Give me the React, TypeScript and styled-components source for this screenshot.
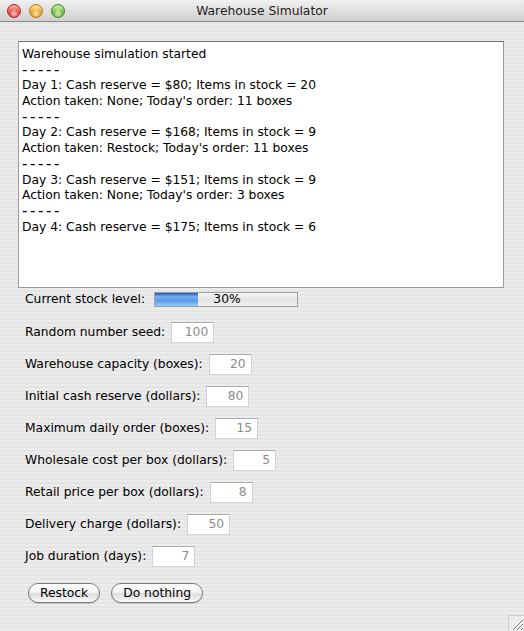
import React from "react";
import styled, { createGlobalStyle } from "styled-components";

const Global = createGlobalStyle`
  html, body { margin: 0; padding: 0; }
  body { font-family: "DejaVu Sans", "Liberation Sans", sans-serif; }
`;

const Window = styled.div`
  position: relative;
  width: 524px;
  height: 631px;
  display: flex;
  flex-direction: column;
  overflow: hidden;
  background: repeating-linear-gradient(
    to bottom,
    #ececec 0px,
    #ececec 2px,
    #e5e5e5 2px,
    #e5e5e5 4px
  );
`;

const TitleBar = styled.div`
  height: 21px;
  flex: 0 0 21px;
  border-bottom: 1px solid #8a8a8a;
  border-radius: 5px 5px 0 0;
  background: linear-gradient(to bottom, #f0f0f0 0%, #e0e0e0 50%, #cfcfcf 100%);
  display: flex;
  align-items: center;
  position: relative;
`;

const Lights = styled.div`
  display: flex;
  gap: 8px;
  padding-left: 7px;
`;

const Light = styled.span<{ $c: string; $d: string }>`
  width: 14px;
  height: 14px;
  border-radius: 50%;
  box-sizing: border-box;
  border: 1px solid ${(p) => p.$d};
  background: radial-gradient(circle at 50% 78%, #ffffffaa 0%, transparent 45%),
    radial-gradient(circle at 50% 30%, ${(p) => p.$c} 0%, ${(p) => p.$d} 100%);
  box-shadow: inset 0 2px 2px rgba(255, 255, 255, 0.5);
`;

const Title = styled.div`
  position: absolute;
  left: 0;
  right: 0;
  top: 0;
  bottom: 0;
  display: flex;
  align-items: center;
  justify-content: center;
  font-size: 12.3px;
  color: #222;
  pointer-events: none;
`;

const Content = styled.div`
  display: flex;
  flex-direction: column;
  padding: 19px 0 0 18px;
`;

const LogArea = styled.div`
  width: 486px;
  height: 247px;
  box-sizing: border-box;
  background: #fff;
  border: 1px solid #9a9a9a;
  border-top-color: #6e6e6e;
  padding: 5px 3px 0;
  font-size: 12.3px;
  line-height: 15.7px;
  color: #000;
`;

const Line = styled.div<{ $sep?: boolean }>`
  height: 15.7px;
  white-space: pre;
  letter-spacing: ${(p) => (p.$sep ? "2.6px" : "normal")};
  font-size: ${(p) => (p.$sep ? "15px" : "inherit")};
  line-height: 15.7px;
`;

const Form = styled.div`
  display: flex;
  flex-direction: column;
  padding: 0 0 0 7px;
`;

const Row = styled.div<{ $h?: number; $mb?: number }>`
  display: flex;
  align-items: center;
  height: ${(p) => p.$h ?? 32}px;
  margin-bottom: ${(p) => p.$mb ?? 0}px;
  font-size: 12.3px;
  color: #000;
`;

const Label = styled.span`
  margin-right: 6px;
`;

const Field = styled.div`
  width: 43px;
  height: 21px;
  box-sizing: border-box;
  background: #fff;
  border: 1px solid #d2d2d2;
  border-top-color: #ababab;
  color: #8a8a8a;
  font-size: 12.3px;
  display: flex;
  align-items: center;
  justify-content: flex-end;
  padding-right: 5px;
`;

const Progress = styled.div`
  position: relative;
  width: 144px;
  height: 15px;
  box-sizing: border-box;
  border: 1px solid #a0a0a0;
  background: linear-gradient(to bottom, #f6f6f6 0%, #e4e4e4 50%, #f0f0f0 100%);
  display: flex;
  align-items: center;
  justify-content: center;
  font-size: 12.3px;
  margin-left: 3px;
`;

const Fill = styled.div`
  position: absolute;
  left: 0;
  top: 0;
  bottom: 0;
  background: linear-gradient(
    to bottom,
    #1f56c0 0%,
    #7cb2f0 30%,
    #5a9ae6 55%,
    #93c9f8 100%
  );
`;

const ProgressText = styled.span`
  position: relative;
  margin-left: 2px;
`;

const ButtonRow = styled.div`
  display: flex;
  gap: 11px;
  padding: 11px 0 0 10px;
`;

const Button = styled.button`
  height: 20px;
  box-sizing: border-box;
  border: 1px solid #7a7a7a;
  border-radius: 10px;
  background: linear-gradient(to bottom, #ffffff 0%, #f3f3f3 45%, #dedede 55%, #f8f8f8 100%);
  font-family: "DejaVu Sans", "Liberation Sans", sans-serif;
  font-size: 12.3px;
  color: #000;
  padding: 0 11px;
  display: flex;
  align-items: center;
  box-shadow: 0 1px 1px rgba(0, 0, 0, 0.15);
`;

const Grip = styled.div`
  position: absolute;
  right: 0;
  bottom: 0;
  width: 16px;
  height: 16px;
  box-sizing: border-box;
  border-left: 1px solid #d0d0d0;
  border-top: 1px solid #d0d0d0;
  background: #ececec;
`;

const log = [
  "Warehouse simulation started",
  "-----",
  "Day 1: Cash reserve = $80; Items in stock = 20",
  "Action taken: None; Today's order: 11 boxes",
  "-----",
  "Day 2: Cash reserve = $168; Items in stock = 9",
  "Action taken: Restock; Today's order: 11 boxes",
  "-----",
  "Day 3: Cash reserve = $151; Items in stock = 9",
  "Action taken: None; Today's order: 3 boxes",
  "-----",
  "Day 4: Cash reserve = $175; Items in stock = 6",
];

const fields: [string, string][] = [
  ["Random number seed:", "100"],
  ["Warehouse capacity (boxes):", "20"],
  ["Initial cash reserve (dollars):", "80"],
  ["Maximum daily order (boxes):", "15"],
  ["Wholesale cost per box (dollars):", "5"],
  ["Retail price per box (dollars):", "8"],
  ["Delivery charge (dollars):", "50"],
  ["Job duration (days):", "7"],
];

export default function App() {
  const pct = 30;
  return (
    <>
      <Global />
      <Window>
        <TitleBar>
          <Lights>
            <Light $c="#ff8a80" $d="#b3201a" />
            <Light $c="#ffd86a" $d="#c77700" />
            <Light $c="#b6f07a" $d="#3c8e12" />
          </Lights>
          <Title>Warehouse Simulator</Title>
        </TitleBar>
        <Content>
          <LogArea>
            {log.map((l, i) => (
              <Line key={i} $sep={l === "-----"}>
                {l}
              </Line>
            ))}
          </LogArea>
          <Form>
            <Row $h={22} $mb={6}>
              <Label>Current stock level:</Label>
              <Progress>
                <Fill style={{ width: `${pct}%` }} />
                <ProgressText>{pct}%</ProgressText>
              </Progress>
            </Row>
            {fields.map(([l, v]) => (
              <Row key={l}>
                <Label>{l}</Label>
                <Field>{v}</Field>
              </Row>
            ))}
          </Form>
          <ButtonRow>
            <Button>Restock</Button>
            <Button>Do nothing</Button>
          </ButtonRow>
        </Content>
        <Grip>
          <svg width="15" height="15" viewBox="0 0 15 15">
            <path d="M14 4 L4 14 M14 8 L8 14 M14 12 L12 14" stroke="#777" strokeWidth="1" />
            <path d="M14 5 L5 14 M14 9 L9 14" stroke="#fff" strokeWidth="1" />
          </svg>
        </Grip>
      </Window>
    </>
  );
}
